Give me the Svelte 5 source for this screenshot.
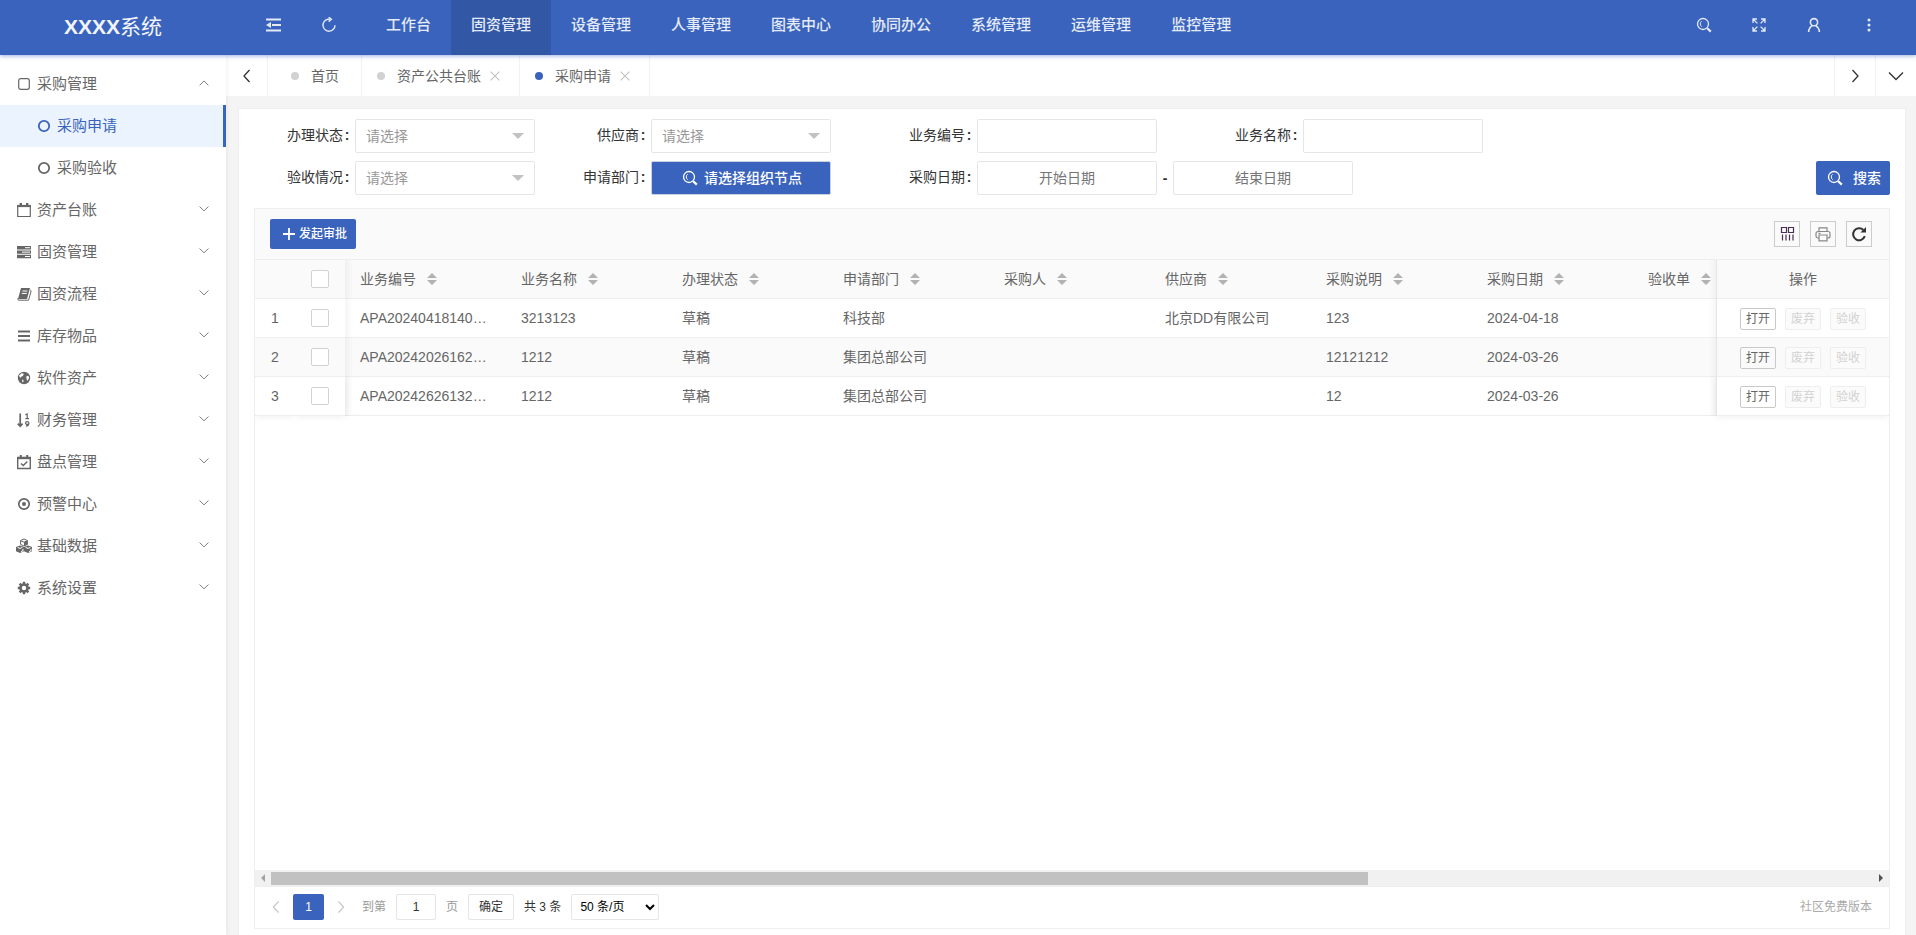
<script lang="ts">
  const navs = ['工作台', '固资管理', '设备管理', '人事管理', '图表中心', '协同办公', '系统管理', '运维管理', '监控管理'];
  let activeNav = $state('固资管理');

  const menus = [
    { title: '资产台账', icon: 'calendar' },
    { title: '固资管理', icon: 'server' },
    { title: '固资流程', icon: 'book' },
    { title: '库存物品', icon: 'bars' },
    { title: '软件资产', icon: 'globe' },
    { title: '财务管理', icon: 'sort' },
    { title: '盘点管理', icon: 'check' },
    { title: '预警中心', icon: 'dot' },
    { title: '基础数据', icon: 'cubes' },
    { title: '系统设置', icon: 'cog' },
  ];
  const children = ['采购申请', '采购验收'];
  let activeChild = $state('采购申请');

  const columns = [
    { key: 'code', title: '业务编号' },
    { key: 'name', title: '业务名称' },
    { key: 'status', title: '办理状态' },
    { key: 'dept', title: '申请部门' },
    { key: 'buyer', title: '采购人' },
    { key: 'supplier', title: '供应商' },
    { key: 'remark', title: '采购说明' },
    { key: 'date', title: '采购日期' },
    { key: 'receipt', title: '验收单' },
  ];

  const rows: Record<string, string>[] = [
    { code: 'APA20240418140522', name: '3213123', status: '草稿', dept: '科技部', supplier: '北京DD有限公司', remark: '123', date: '2024-04-18' },
    { code: 'APA20242026162018', name: '1212', status: '草稿', dept: '集团总部公司', remark: '12121212', date: '2024-03-26' },
    { code: 'APA20242626132641', name: '1212', status: '草稿', dept: '集团总部公司', remark: '12', date: '2024-03-26' },
  ];

  let checked = $state([false, false, false]);
  let page = $state('1');

  function toggleAll(e: Event) {
    const on = (e.target as HTMLInputElement).checked;
    checked = checked.map(() => on);
  }
</script>

{#snippet search()}
  <svg class="icon" viewBox="0 0 16 16" fill="none" stroke="currentColor">
    <circle cx="7" cy="7" r="5.5" stroke-width="1.3" />
    <path d="M5.6 4.2a3.4 3.4 0 0 0 0 5.4" stroke-width="1" />
    <path d="M11.2 11.2l3.6 3.4" stroke-width="2.2" />
  </svg>
{/snippet}

{#snippet menuIcon(name: string)}
  <svg class="menu-icon" viewBox="0 0 16 16" fill="none" stroke="currentColor" stroke-width="1.4">
    {#if name === 'square'}
      <rect x="2.7" y="2.7" width="10.6" height="10.6" rx="2" stroke-width="1.2" />
    {:else if name === 'calendar'}
      <path d="M1.7 3.5h12.6v11H1.7z" stroke-width="1.2" />
      <path d="M1.5 4h13" stroke-width="2.2" />
      <path d="M4.8 1v3.5M11.2 1v3.5" stroke-width="2.4" />
    {:else if name === 'check'}
      <path d="M1.7 3.5h12.6v11H1.7z" />
      <path d="M1.5 4.2h13" stroke-width="2" />
      <path d="M4.8 1v3.5M11.2 1v3.5" stroke-width="2" />
      <path d="M5 9.4l2.3 2.2 4-4" />
    {:else if name === 'server'}
      <path d="M1 2h14v3.4H1zM1 6.4h14v3.4H1zM1 10.8h14v3.4H1z" fill="currentColor" stroke="none" />
      <path d="M9 3.7h5M6 8.1h8M9 12.5h5" stroke="#fff" stroke-width="1" />
    {:else if name === 'book'}
      <path d="M5 2h9l-3 11H2z" fill="currentColor" stroke="none" />
      <path d="M14.2 4l1 .8-2.6 9.4H2.4L1.6 12.5" stroke-width="1" />
      <path d="M6.5 5h5M5.8 7.4h5" stroke="#fff" stroke-width="1" />
    {:else if name === 'bars'}
      <path d="M2 3.5h12M2 8h12M2 12.5h12" stroke-width="1.8" />
    {:else if name === 'globe'}
      <circle cx="8" cy="8" r="6.2" fill="currentColor" stroke="none" />
      <path d="M3 5.6l2.8-2.4 2 .6-.8 2-2 1.2-.8 1zM10.2 6.4l2-.6 1 1.4-.8 2.4-1.2 1.2-.6-2zM6 9.6l1.6.6-.2 1.6-.8 1z" fill="#fff" stroke="none" />
    {:else if name === 'sort'}
      <path d="M4.2 1.5v12.4M1.8 11.6l2.4 2.6 2.4-2.6" stroke-width="1.7" />
      <path d="M9.4 2.9l1.8-.9v4.6M9.4 6.6h3.6" stroke-width="1.2" />
      <path d="M12.9 11a1.7 1.4 0 1 1-3.4 0 1.7 1.4 0 0 1 3.4 0c0 2-.8 3-3 3.2" stroke-width="1.2" />
    {:else if name === 'dot'}
      <circle cx="8" cy="8" r="5.2" stroke-width="1.7" />
      <circle cx="8" cy="8" r="2" fill="currentColor" stroke="none" />
    {:else if name === 'cubes'}
      <path d="M8 1l3.4 1.5v3.9L8 8 4.6 6.4V2.5zM4.6 2.7L8 4.2l3.4-1.5" stroke-width="1" />
      <path d="M8 4.2l3.4-1.5v3.7L8 8z" fill="currentColor" stroke="none" />
      <path d="M4 7.4L8 9v4.2L4 15l-4-1.8V9z" fill="currentColor" stroke="none" />
      <path d="M12 7.4L16 9v4.2L12 15l-4-1.8V9z" fill="currentColor" stroke="none" />
      <path d="M1.6 9.4L4 10.4l2.4-1M9.6 9.4l2.4 1 2.4-1M5 13.6l2-.9v-1.8M13 13.6l2-.9v-1.8" stroke="#fff" stroke-width="1" />
    {:else if name === 'cog'}
      <circle cx="8" cy="8" r="3.5" stroke-width="2.6" />
      <path d="M8 1.8v2.4M8 11.8v2.4M1.8 8h2.4M11.8 8h2.4M3.6 3.6l1.7 1.7M10.7 10.7l1.7 1.7M12.4 3.6l-1.7 1.7M5.3 10.7l-1.7 1.7" stroke-width="2.4" />
    {:else}
      <circle cx="8" cy="8" r="5.2" stroke-width="1.8" />
    {/if}
  </svg>
{/snippet}

{#snippet arrow(d: string)}
  <svg class="arrow" viewBox="0 0 16 16" fill="none" stroke="currentColor" stroke-width="1.3"><path {d} /></svg>
{/snippet}

<div class="app">
  <header>
    <div class="logo"><b>XXXX</b>系统</div>
    <button class="tool" aria-label="收起菜单">
      <svg class="icon" viewBox="0 0 16 16" fill="none" stroke="currentColor" stroke-width="2">
        <path d="M0 2.5h15M6 8h9M0 13.5h15" />
        <path d="M0 8l5-3v6z" fill="currentColor" stroke="none" />
      </svg>
    </button>
    <button class="tool" aria-label="刷新">
      <svg class="icon" viewBox="0 0 16 16" fill="none" stroke="currentColor" stroke-width="1.4">
        <path d="M9 2.3H6.8A6 6 0 1 0 14 8.2" />
        <path d="M7.6 0l2.8 2.3-2.8 2.3" />
      </svg>
    </button>
    <nav>
      {#each navs as nav}
        <a href="#top" class:active={nav === activeNav} onclick={() => (activeNav = nav)}>{nav}</a>
      {/each}
    </nav>
    <button class="tool" aria-label="查找">{@render search()}</button>
    <button class="tool" aria-label="全屏">
      <svg class="icon" viewBox="0 0 16 16" fill="none" stroke="currentColor" stroke-width="1.3">
        <path d="M2 6V2h4M10 2h4v4M14 10v4h-4M6 14H2v-4M2 2l4.4 4.4M14 2L9.6 6.4M14 14L9.6 9.6M2 14l4.4-4.4" />
      </svg>
    </button>
    <button class="tool" aria-label="用户">
      <svg class="icon" viewBox="0 0 16 16" fill="none" stroke="currentColor" stroke-width="1.6">
        <circle cx="8" cy="5.2" r="3.6" />
        <path d="M2.6 15c.2-3.2 1.4-5 3.6-6.4M13.4 15c-.2-3.2-1.4-5-3.6-6.4" />
      </svg>
    </button>
    <button class="tool" aria-label="更多">
      <svg class="icon" viewBox="0 0 16 16" fill="currentColor">
        <circle cx="8" cy="3" r="1.5" /><circle cx="8" cy="8" r="1.5" /><circle cx="8" cy="13" r="1.5" />
      </svg>
    </button>
  </header>

  <div class="body">
    <aside>
      <a href="#top" class="menu">{@render menuIcon('square')}<span>采购管理</span>{@render arrow('M3 9.5l5-5 5 5')}</a>
      {#each children as child}
        <a href="#top" class="menu child" class:active={child === activeChild} onclick={() => (activeChild = child)}>
          {@render menuIcon('circle')}<span>{child}</span>
        </a>
      {/each}
      {#each menus as menu}
        <a href="#top" class="menu">{@render menuIcon(menu.icon)}<span>{menu.title}</span>{@render arrow('M3 4l5 5 5-5')}</a>
      {/each}
    </aside>

    <main>
      <div class="tabs">
        <button class="step prev" aria-label="向左">{@render arrow('M10.5 2L5 8l5.5 6')}</button>
        <a href="#top" class="tab home"><i></i>首页</a>
        <a href="#top" class="tab"><i></i>资产公共台账{@render arrow('M3 3l10 10M13 3L3 13')}</a>
        <a href="#top" class="tab active"><i></i>采购申请{@render arrow('M3 3l10 10M13 3L3 13')}</a>
        <span class="space"></span>
        <button class="step" aria-label="向右">{@render arrow('M5.5 2L11 8l-5.5 6')}</button>
        <button class="step" aria-label="展开">{@render arrow('M1 4.500l7 7 7-7')}</button>
      </div>

      <section class="card">
        <form onsubmit={(e) => e.preventDefault()}>
          <label for="status">办理状态<span>:</span></label>
          <div class="select"><select id="status"><option>请选择</option></select></div>
          <label for="supplier">供应商<span>:</span></label>
          <div class="select"><select id="supplier"><option>请选择</option></select></div>
          <label for="code">业务编号<span>:</span></label>
          <input id="code" type="text" />
          <label for="name">业务名称<span>:</span></label>
          <input id="name" type="text" />

          <label class="first" for="accept">验收情况<span>:</span></label>
          <div class="select"><select id="accept"><option>请选择</option></select></div>
          <label for="dept">申请部门<span>:</span></label>
          <button id="dept" class="primary org" type="button">{@render search()}请选择组织节点</button>
          <label for="start">采购日期<span>:</span></label>
          <div class="range">
            <input id="start" class="date" type="text" placeholder="开始日期" />
            <b>-</b>
            <input class="date" type="text" placeholder="结束日期" aria-label="结束日期" />
          </div>
          <button class="primary submit">{@render search()}搜索</button>
        </form>

        <div class="grid">
          <div class="toolbar">
            <button class="primary add">
              <svg viewBox="0 0 12 12" fill="none" stroke="currentColor" stroke-width="1.8"><path d="M6 0v12M0 6h12" /></svg>发起审批
            </button>
            <div class="tools">
              <button aria-label="筛选列">
                <svg class="icon" viewBox="0 0 16 16" fill="none" stroke="#4b2c52" stroke-width="1.2">
                  <path d="M2.5 1.5h5v5h-5zM9.5 1.5h5v5h-5zM3.5 8.500v6M7 8.500v6M10.500 8.500v6M14 8.500v6" />
                </svg>
              </button>
              <button aria-label="打印">
                <svg class="icon" viewBox="0 0 16 16" fill="none" stroke="#888" stroke-width="1.2">
                  <path d="M4 5V1.800h8V5M4 12H3a2 2 0 0 1-2-2V7.500a2 2 0 0 1 2-2h10a2 2 0 0 1 2 2V10a2 2 0 0 1-2 2h-1M4 9h8v5.800H4zM3.500 7.300h2" />
                </svg>
              </button>
              <button aria-label="重载">
                <svg class="icon" viewBox="0 0 16 16" fill="none" stroke="#333" stroke-width="2">
                  <path d="M13.8 10.2A6 6 0 1 1 12.4 4" />
                  <path d="M15 1v5.600H9.400z" fill="#333" stroke="none" />
                </svg>
              </button>
            </div>
          </div>

          <div class="scroll">
            <table>
              <colgroup>
                <col class="c-no" /><col class="c-check" />
                {#each columns as col}<col class={col.key === 'receipt' ? '' : 'c-data'} />{/each}
                <col class="c-op" />
              </colgroup>
              <thead>
                <tr>
                  <th></th>
                  <th class="check"><input type="checkbox" aria-label="全选" onchange={toggleAll} /></th>
                  {#each columns as col}
                    <th>{col.title}<svg class="sorter" viewBox="0 0 10 12"><path d="M0 5l5-5 5 5zM0 7h10l-5 5z" /></svg></th>
                  {/each}
                  <th class="op">操作</th>
                </tr>
              </thead>
              <tbody>
                {#each rows as row, i}
                  <tr>
                    <td class="no">{i + 1}</td>
                    <td class="check"><input type="checkbox" aria-label="选择第{i + 1}行" bind:checked={checked[i]} /></td>
                    {#each columns as col}
                      <td class="text">{row[col.key] ?? ''}</td>
                    {/each}
                    <td class="op">
                      <div><button>打开</button><button disabled>废弃</button><button disabled>验收</button></div>
                    </td>
                  </tr>
                {/each}
              </tbody>
            </table>
          </div>

          <div class="bar">
            <svg viewBox="0 0 8 8"><path d="M6 0v8L2 4z" fill="#a3a3a3" /></svg>
            <div class="track"><div class="thumb"></div></div>
            <svg viewBox="0 0 8 8"><path d="M2 0v8l4-4z" fill="#505050" /></svg>
          </div>

          <div class="pager">
            <button class="turn" aria-label="上一页">{@render arrow('M11 1.5L5 8l6 6.5')}</button>
            <button class="current">1</button>
            <button class="turn" aria-label="下一页">{@render arrow('M5 1.5L11 8l-6 6.5')}</button>
            <label class="goto">到第<input type="text" bind:value={page} />页</label>
            <button class="ok">确定</button>
            <span class="total">共 3 条</span>
            <select aria-label="每页条数"><option>50 条/页</option></select>
            <span class="edition">社区免费版本</span>
          </div>
        </div>
      </section>
    </main>
  </div>
</div>

<style>
  :global(body) {
    margin: 0;
    background: #f4f4f4;
  }

  .app {
    display: flex;
    flex-direction: column;
    min-height: 100vh;
    font-family: "Liberation Sans", "Noto Sans CJK SC", sans-serif;
    font-size: 14px;
    line-height: 20px;
    color: #666;
  }

  .app * {
    box-sizing: border-box;
  }

  a {
    color: inherit;
    text-decoration: none;
  }

  button, input, select {
    font: inherit;
    color: inherit;
    margin: 0;
    padding: 0;
  }

  button {
    display: flex;
    align-items: center;
    justify-content: center;
    border: none;
    background: none;
    white-space: nowrap;
    cursor: pointer;
  }

  .icon, .arrow, .menu-icon {
    width: 16px;
    height: 16px;
    flex: none;
  }

  header {
    display: flex;
    height: 55px;
    padding-right: 20px;
    background: #3963bc;
    color: #e4eaf6;
    box-shadow: 0 1px 4px rgba(57, 99, 188, 0.5);
    z-index: 2;
  }

  .logo {
    width: 226px;
    margin-right: 20px;
    font-size: 21px;
    line-height: 54px;
    text-align: center;
    color: #f2f5fb;
  }

  .tool {
    width: 55px;
    height: 49px;
  }

  nav {
    display: flex;
    flex: 1;
    margin-left: 10px;
  }

  nav a {
    padding: 0 20px;
    font-size: 15px;
    font-weight: 500;
    line-height: 49px;
    white-space: nowrap;
  }

  nav a.active {
    background: #3157a5;
  }

  .body {
    display: flex;
    flex: 1;
  }

  aside {
    width: 226px;
    flex: none;
    padding-top: 8px;
    background: #fff;
    box-shadow: 1px 0 4px rgba(0, 0, 0, 0.06);
    z-index: 1;
  }

  .menu {
    display: flex;
    align-items: center;
    gap: 5px;
    height: 42px;
    padding: 0 15px 0 16px;
    font-size: 15px;
  }

  .menu span {
    flex: 1;
  }

  .menu .arrow {
    width: 14px;
    height: 14px;
    stroke-width: 1;
  }

  .child {
    padding-left: 36px;
  }

  .child.active {
    background: #ebf3ff;
    border-right: 3px solid #3963bc;
    color: #3963bc;
  }

  main {
    display: flex;
    flex-direction: column;
    flex: 1;
    min-width: 0;
  }

  .tabs {
    display: flex;
    height: 41px;
    background: #fff;
  }

  .step {
    width: 41px;
    border-left: 1px solid #f2f2f2;
    color: #333;
  }

  .step.prev {
    border-left: none;
  }

  .tab {
    display: flex;
    align-items: center;
    padding: 0 17px 0 15px;
    border-left: 1px solid #f2f2f2;
  }

  .tab.home {
    padding: 0 22px 0 23px;
  }

  .tab:nth-child(4) {
    border-right: 1px solid #f2f2f2;
  }

  .tab i {
    width: 8px;
    height: 8px;
    margin-right: 12px;
    border-radius: 50%;
    background: #d2d2d2;
  }

  .tab.active i {
    background: #3963bc;
  }

  .tab .arrow {
    width: 14px;
    height: 14px;
    margin-left: 7px;
    color: #c2c2c2;
  }

  .space {
    flex: 1;
  }

  .card {
    display: flex;
    flex-direction: column;
    flex: 1;
    margin: 12px 10px 0 12px;
    padding: 10px 15px 6px;
    border: 1px solid #eee;
    border-bottom: none;
    background: #fff;
  }

  form {
    display: grid;
    grid-template-columns: 101px 180px 116px 180px 146px 180px 146px 180px 1fr;
    row-gap: 8px;
    color: #333;
  }

  form label {
    padding-right: 4px;
    line-height: 32px;
    text-align: right;
    white-space: nowrap;
  }

  form label.first {
    grid-column: 1;
  }

  form label span {
    display: inline-block;
    width: 8px;
    text-align: center;
    font-weight: bold;
  }

  form input, form select {
    width: 180px;
    height: 34px;
    padding: 0 10px;
    border: 1px solid #e6e6e6;
    border-radius: 2px;
    background: #fff;
  }

  form select {
    appearance: none;
    color: #999;
  }

  .select {
    position: relative;
  }

  .select::after {
    content: "";
    position: absolute;
    top: 14px;
    right: 11px;
    border: 6px solid transparent;
    border-top-color: #c2c2c2;
    pointer-events: none;
  }

  .primary {
    height: 34px;
    border-radius: 2px;
    background: #3963bc;
    color: #fff;
    font-weight: 500;
  }

  .org {
    gap: 6px;
    padding-left: 2px;
    border: 1px solid #c9d0e0;
  }

  .range {
    display: flex;
    grid-column: span 3;
    align-items: center;
  }

  .range b {
    width: 16px;
    text-align: center;
  }

  .date {
    text-align: center;
  }

  .submit {
    gap: 10px;
    width: 74px;
    padding-left: 2px;
    justify-self: end;
  }

  .grid {
    display: flex;
    flex-direction: column;
    flex: 1;
    margin-top: 13px;
    border: 1px solid #eee;
  }

  .toolbar {
    display: flex;
    align-items: center;
    justify-content: space-between;
    height: 51px;
    padding: 0 17px 0 15px;
    border-bottom: 1px solid #eee;
    background: #fafafa;
  }

  .add {
    gap: 4px;
    width: 86px;
    height: 30px;
    padding-left: 4px;
    font-size: 12px;
  }

  .add svg {
    width: 12px;
    height: 12px;
  }

  .tools {
    display: flex;
    gap: 10px;
  }

  .tools button {
    width: 26px;
    height: 26px;
    border: 1px solid #ccc;
  }

  .scroll {
    flex: 1;
    overflow: hidden;
  }

  table {
    width: 100%;
    table-layout: fixed;
    border-spacing: 0;
  }

  .c-no {
    width: 40px;
  }

  .c-check {
    width: 50px;
  }

  .c-data {
    width: 161px;
  }

  .c-op {
    width: 173px;
  }

  th, td {
    height: 39px;
    padding: 0 15px;
    border-bottom: 1px solid #eee;
    font-weight: normal;
    text-align: left;
    white-space: nowrap;
    background: #fff;
  }

  th, tbody tr:nth-child(even) td {
    background: #fafafa;
  }

  .text {
    overflow: hidden;
    text-overflow: ellipsis;
  }

  .check, .op {
    position: relative;
    text-align: center;
  }

  .check {
    padding-left: 16px;
  }

  .check::after, .op::before {
    content: "";
    position: absolute;
    top: 0;
    bottom: -1px;
    left: 100%;
    width: 8px;
    background: linear-gradient(to right, rgba(0, 0, 0, 0.04), transparent);
  }

  .op::before {
    left: -8px;
    background: linear-gradient(to left, rgba(0, 0, 0, 0.04), transparent);
  }

  .op {
    border-left: 1px solid #eee;
  }

  /* the pinned columns drop a shadow under their last row */
  tbody tr:last-child .op, tbody tr:last-child .check, tbody tr:last-child .no {
    box-shadow: 0 0 8px rgba(0, 0, 0, 0.08);
    clip-path: inset(0 0 -8px 0);
  }

  tbody tr:last-child .check {
    clip-path: inset(0 -8px -8px 0);
  }

  tbody tr:last-child .op {
    clip-path: inset(0 0 -8px -8px);
  }

  .no {
    padding: 0;
    text-align: center;
  }

  input[type="checkbox"] {
    appearance: none;
    display: block;
    width: 18px;
    height: 18px;
    border: 1px solid #d2d2d2;
    border-radius: 2px;
    background: #fff;
  }

  input[type="checkbox"]:checked {
    background: #3963bc;
  }

  .sorter {
    width: 10px;
    height: 12px;
    margin-left: 11px;
    vertical-align: -1px;
    fill: #b2b2b2;
  }

  .op div {
    display: flex;
    justify-content: center;
    gap: 9px;
    padding-top: 2px;
  }

  .op button {
    width: 36px;
    height: 22px;
    border: 1px solid #c9c9c9;
    border-radius: 2px;
    font-size: 12px;
  }

  .op button:disabled {
    border-color: #eee;
    background: #fbfbfb;
    color: #d2d2d2;
  }

  .bar {
    display: flex;
    align-items: center;
    height: 17px;
    border-bottom: 1px solid #eee;
    background: #f1f1f1;
  }

  .bar svg {
    width: 8px;
    height: 8px;
    margin: 0 4px;
  }

  .track {
    flex: 1;
  }

  .thumb {
    width: 68.5%;
    height: 13px;
    background: #c1c1c1;
  }

  .pager {
    display: flex;
    align-items: center;
    height: 41px;
    padding: 0 17px 2px 4px;
    font-size: 12px;
    color: #333;
  }

  .pager button, .pager input, .pager select {
    height: 26px;
    border-radius: 2px;
  }

  .turn {
    width: 34px;
    color: #c2c2c2;
  }

  .pager .turn .arrow {
    width: 14px;
    height: 14px;
  }

  .pager .current {
    width: 31px;
    background: #3963bc;
    color: #fff;
  }

  .goto {
    margin-left: 4px;
    color: #999;
  }

  .goto input {
    width: 40px;
    margin: 0 10px;
    border: 1px solid #e6e6e6;
    color: #333;
    text-align: center;
  }

  .pager .ok {
    width: 46px;
    margin: 0 10px;
    border: 1px solid #e6e6e6;
  }

  .pager select {
    width: 88px;
    margin-left: 10px;
    padding: 0 4px;
    border: 1px solid #e6e6e6;
    background: #fff;
    color: #000;
  }

  .edition {
    margin-left: auto;
    color: #aaa;
  }
</style>
